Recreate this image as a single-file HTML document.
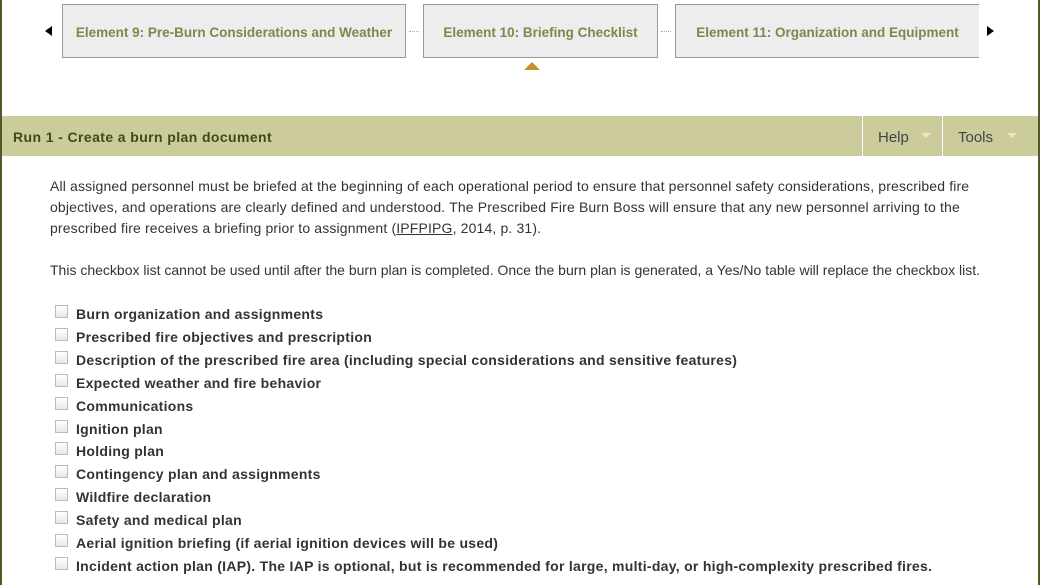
<!DOCTYPE html>
<html><head><style>
*{margin:0;padding:0;box-sizing:border-box}
body{width:1041px;height:585px;overflow:hidden;background:#fff;font-family:"Liberation Sans",Arial,sans-serif;position:relative}
.lb{position:absolute;left:0;top:0;width:2px;height:585px;background:#4d5a26}
.rb{position:absolute;left:1038px;top:0;width:2px;height:585px;background:#4d5a26}
.tab{position:absolute;top:4px;height:54px;background:#ededed;border:1px solid #999;color:#7a8a4a;font-weight:bold;font-size:13.5px;line-height:55px;text-align:center}
.dots{position:absolute;top:31px;width:10px;border-top:1px dotted #aaa}
.arr{position:absolute;top:26px;width:0;height:0;border-top:5px solid transparent;border-bottom:5px solid transparent}
.hdr{position:absolute;left:2px;top:116px;width:1036px;height:40px;background:#cccb9b}
.hdr .t{position:absolute;left:11px;top:13px;font-size:14px;font-weight:bold;color:#3d4a1c;letter-spacing:0.4px}
.hb{position:absolute;top:0;height:40px;border-left:1px solid #fff;color:#444;font-size:15px;line-height:43px;padding-left:15px}
.hb i{position:absolute;top:17px;width:0;height:0;border-left:5px solid transparent;border-right:5px solid transparent;border-top:5px solid #e8e8d0}
p{position:absolute;left:50px;font-size:14px;line-height:21px;color:#333;width:990px;letter-spacing:0.15px}
.ck{position:absolute;left:55px;font-size:14px;font-weight:bold;color:#333;letter-spacing:0.28px}
.ck span{position:absolute;left:0;top:-9px;width:13px;height:13px;border:1px solid #bbb;background:linear-gradient(#fff,#e8e8e8)}
.ck b{position:absolute;left:21px;top:-8px;white-space:nowrap}
</style></head><body>
<div class="lb"></div><div class="rb"></div>
<div class="arr" style="left:45px;border-right:7px solid #000"></div>
<div class="tab" style="left:62px;width:344px">Element 9: Pre-Burn Considerations and Weather</div>
<div class="dots" style="left:409px"></div>
<div class="tab" style="left:423px;width:235px">Element 10: Briefing Checklist</div>
<div class="dots" style="left:661px"></div>
<div class="tab" style="left:675px;width:304px;border-right:none">Element 11: Organization and Equipment</div>
<div class="arr" style="left:987px;border-left:7px solid #000"></div>
<div style="position:absolute;left:524px;top:62px;width:0;height:0;border-left:8px solid transparent;border-right:8px solid transparent;border-bottom:8px solid #c8912a"></div>
<div class="hdr"><div class="t">Run 1 - Create a burn plan document</div>
<div class="hb" style="left:860px;width:80px">Help<i style="left:58px"></i></div>
<div class="hb" style="left:940px;width:96px">Tools<i style="left:64px"></i></div></div>
<p style="top:176px;width:950px">All assigned personnel must be briefed at the beginning of each operational period to ensure that personnel safety considerations, prescribed fire objectives, and operations are clearly defined and understood. The Prescribed Fire Burn Boss will ensure that any new personnel arriving to the prescribed fire receives a briefing prior to assignment (<u>IPFPIPG</u>, 2014, p. 31).</p>
<p style="top:260px;white-space:nowrap;letter-spacing:0px">This checkbox list cannot be used until after the burn plan is completed. Once the burn plan is generated, a Yes/No table will replace the checkbox list.</p>
<div class="ck" style="top:314px"><span></span><b>Burn organization and assignments</b></div>
<div class="ck" style="top:337px"><span></span><b>Prescribed fire objectives and prescription</b></div>
<div class="ck" style="top:360px"><span></span><b>Description of the prescribed fire area (including special considerations and sensitive features)</b></div>
<div class="ck" style="top:383px"><span></span><b>Expected weather and fire behavior</b></div>
<div class="ck" style="top:406px"><span></span><b>Communications</b></div>
<div class="ck" style="top:429px"><span></span><b>Ignition plan</b></div>
<div class="ck" style="top:451px"><span></span><b>Holding plan</b></div>
<div class="ck" style="top:474px"><span></span><b>Contingency plan and assignments</b></div>
<div class="ck" style="top:497px"><span></span><b>Wildfire declaration</b></div>
<div class="ck" style="top:520px"><span></span><b>Safety and medical plan</b></div>
<div class="ck" style="top:543px"><span></span><b>Aerial ignition briefing (if aerial ignition devices will be used)</b></div>
<div class="ck" style="top:566px"><span></span><b>Incident action plan (IAP). The IAP is optional, but is recommended for large, multi-day, or high-complexity prescribed fires.</b></div>
</body></html>
